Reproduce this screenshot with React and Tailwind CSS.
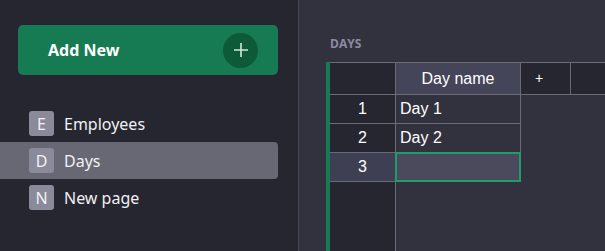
export default function App() {
  const navItems = [
    { letter: "E", label: "Employees" },
    { letter: "D", label: "Days", active: true },
    { letter: "N", label: "New page" },
  ];
  return (
    <div className="w-[605px] h-[251px] flex overflow-hidden bg-[#32323e]" style={{ fontFamily: '"Noto Sans", sans-serif' }}>
      <aside className="w-[299px] h-full shrink-0 bg-[#262630] border-r border-[#474753] flex flex-col">
        <div className="pt-[25px] pl-[18px] pr-[20px]">
          <div className="h-[50px] rounded-[5px] bg-[#167a52] flex items-center justify-between pl-[30px] pr-[20px]">
            <span className="text-white font-bold text-[16px] leading-none">Add New</span>
            <span className="w-[35px] h-[35px] rounded-full bg-[#0d5a39] flex items-center justify-center">
              <svg width="16" height="16" viewBox="0 0 16 16">
                <path d="M8 1v14M1 8h14" stroke="#d4e6dc" strokeWidth="1.6" />
              </svg>
            </span>
          </div>
        </div>
        <nav className="mt-[30px] pr-[20px] flex flex-col">
          {navItems.map((it) => (
            <div
              key={it.label}
              className={`h-[37px] flex items-center pl-[29px] gap-[10px] rounded-r-[4px] ${it.active ? "bg-[#686874]" : ""}`}
            >
              <span className="w-[25px] h-[25px] rounded-[3px] bg-[#8a8a9a] text-[#f2f2f6] text-[16px] flex items-center justify-center leading-none">
                {it.letter}
              </span>
              <span className="text-[#f0f0f4] text-[16px] leading-none">{it.label}</span>
            </div>
          ))}
        </nav>
      </aside>
      <main className="flex-1 h-full pl-[27px] pt-[36px] flex flex-col min-w-0">
        <div className="h-[16px] text-[12px] leading-[16px] font-bold text-[#8c8ca0] pl-[4px]" style={{ fontFamily: '"Open Sans", sans-serif' }}>DAYS</div>
        <div className="mt-[10px] flex-1 flex flex-col border-l-4 border-[#177a52]" style={{ fontFamily: '"Liberation Sans", Arial, sans-serif' }}>
          <div className="flex h-[33px] border-t border-b border-[#6b6b78]">
            <div className="w-[66px] bg-[#262630] border-r border-[#6b6b78]" />
            <div className="w-[125px] bg-[#454559] border-r border-[#6b6b78] flex items-center justify-center text-[16px] text-white">Day name</div>
            <div className="w-[50px] bg-[#262630] border-r border-[#6b6b78] flex items-center pl-[14px] text-[14px] text-white">+</div>
            <div className="flex-1 bg-[#262630]" />
          </div>
          {["Day 1", "Day 2", ""].map((d, i) => {
            const sel = i === 2;
            return (
              <div key={i} className="flex h-[29px]">
                <div className={`w-[66px] border-r border-b border-[#6b6b78] flex items-center justify-center text-[16px] text-white ${sel ? "bg-[#3f3f53]" : "bg-[#262630]"}`}>
                  {i + 1}
                </div>
                {sel ? (
                  <div className="w-[126px] -ml-[1px] -mt-[1px] h-[30px] border-2 border-[#1f9b6c] bg-[#4a4a5c]" />
                ) : (
                  <div className="w-[125px] border-r border-b border-[#6b6b78] flex items-center pl-[4px] text-[16px] text-white">{d}</div>
                )}
              </div>
            );
          })}
          <div className="flex-1 flex">
            <div className="w-[66px] bg-[#262630] border-r border-[#6b6b78]" />
          </div>
        </div>
      </main>
    </div>
  );
}
